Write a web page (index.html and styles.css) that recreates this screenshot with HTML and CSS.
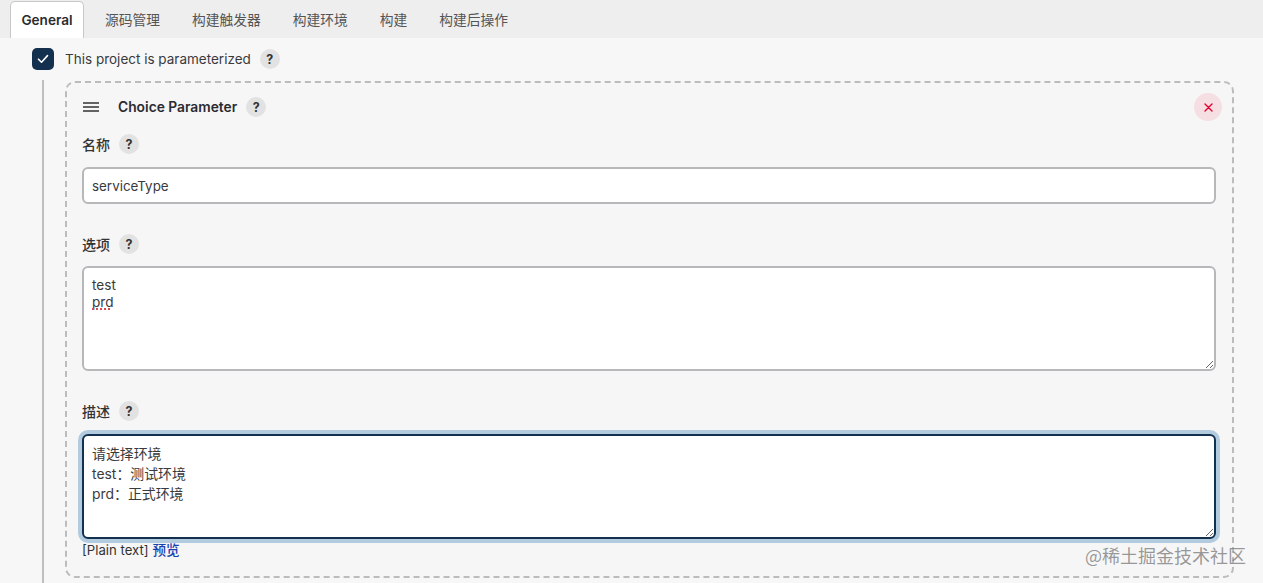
FILE: index.html
```html
<!DOCTYPE html>
<html lang="zh">
<head>
<meta charset="utf-8">
<title>Config</title>
<link rel="stylesheet" href="styles.css">
</head>
<body>
<nav class="tabs">
  <a class="tab active">General</a>
  <a class="tab">源码管理</a>
  <a class="tab">构建触发器</a>
  <a class="tab">构建环境</a>
  <a class="tab">构建</a>
  <a class="tab">构建后操作</a>
</nav>
<main class="content">
  <div class="check-row">
    <span class="checkbox"><svg width="12" height="10" viewBox="0 0 12 10"><path d="M1.5 5.2 4.5 8.2 10.5 1.6" fill="none" stroke="#fff" stroke-width="1.6" stroke-linecap="round" stroke-linejoin="round"/></svg></span>
    <span class="check-label">This project is parameterized</span>
    <span class="help">?</span>
  </div>
  <div class="nested">
    <section class="param">
      <header class="param-head">
        <svg class="drag" width="16" height="10" viewBox="0 0 16 10"><path d="M0 1h16M0 5h16M0 9h16" stroke="#333" stroke-width="1.3"/></svg>
        <strong class="param-title">Choice Parameter</strong>
        <span class="help">?</span>
        <button class="close"><svg width="9" height="9" viewBox="0 0 9 9"><path d="M1 1 8 8M8 1 1 8" stroke="#e6002e" stroke-width="1.4" stroke-linecap="round"/></svg></button>
      </header>
      <div class="label-row first"><span class="label">名称</span><span class="help">?</span></div>
      <input class="field" type="text" value="serviceType" spellcheck="false">
      <div class="label-row second"><span class="label">选项</span><span class="help">?</span></div>
      <div class="area-wrap">
        <textarea class="field area plain" spellcheck="false">test
prd</textarea>
        <span class="squiggle"></span>
      </div>
      <div class="label-row third"><span class="label">描述</span><span class="help">?</span></div>
      <textarea class="field area focus" spellcheck="false">请选择环境
test：测试环境
prd：正式环境</textarea>
      <div class="preview">[Plain text] <a class="preview-link">预览</a></div>
    </section>
  </div>
</main>
<div class="watermark">@稀土掘金技术社区</div>
</body>
</html>
```
FILE: styles.css
```css
* { box-sizing: border-box; }
html, body { height: 100%; }
body {
  margin: 0;
  height: 583px;
  overflow: hidden;
  background: #f7f7f8;
  color: #333;
  font-family: Inter, "Noto Sans CJK SC", sans-serif;
  font-size: 13.6px;
  position: relative;
}
.tabs {
  display: flex;
  align-items: flex-end;
  height: 38px;
  padding-left: 10px;
  background: #eeeeef;
}
.tab {
  display: flex;
  align-items: center;
  justify-content: center;
  height: 37px;
  padding: 0 16px 1px;
  color: #555;
  font-size: 13.75px;
  white-space: nowrap;
}
.tab.active {
  width: 74px;
  padding: 0;
  margin-right: 5px;
  background: #fff;
  border: 1px solid #c8c8c8;
  border-bottom: 0;
  border-radius: 5px 5px 0 0;
  color: #2b2b2f;
  font-size: 13.6px;
  font-weight: 600;
}
.content { padding: 10px 0 0 32px; }
.check-row { display: flex; align-items: center; height: 22px; }
.checkbox {
  display: flex;
  align-items: center;
  justify-content: center;
  width: 22px;
  height: 22px;
  border-radius: 5px;
  background: #14304f;
}
.check-label { margin-left: 11px; margin-right: 9px; color: #3a3a3d; font-size: 13.5px; }
.help {
  display: inline-flex;
  align-items: center;
  justify-content: center;
  width: 20px;
  height: 20px;
  border-radius: 50%;
  background: #e2e2e3;
  color: #333;
  font-size: 12.5px;
  font-weight: 700;
}
.nested {
  margin: 10px 0 0 10px;
  height: 503px;
  border-left: 2px solid #bdbfc1;
  padding: 1px 29px 0 21px;
}
.param {
  position: relative;
  height: 497px;
  padding: 0 16px 0 15px;
  border: 2px dashed #bcbcbe;
  border-radius: 10px;
  background: #f6f6f7;
}
.param-head { display: flex; align-items: center; height: 20px; margin-top: 14px; padding-left: 1px; }
.drag { flex: none; }
.param-title { margin: 0 9px 0 19px; font-size: 13.8px; font-weight: 600; color: #2b2b2f; }
.close {
  position: absolute;
  top: 10px;
  right: 10px;
  display: flex;
  align-items: center;
  justify-content: center;
  width: 28px;
  height: 28px;
  padding: 0;
  border: 0;
  border-radius: 50%;
  background: #f6dfe3;
}
.label-row { display: flex; align-items: center; height: 20px; }
.label-row.first { margin-top: 17px; }
.label-row.second { margin-top: 30px; }
.label-row.third { margin-top: 30px; }
.label { margin-right: 9px; color: #333; font-size: 14px; font-weight: 500; }
.field {
  display: block;
  width: 100%;
  margin-top: 13px;
  padding: 0 8px;
  background: #fff;
  border: 2px solid #b6b8ba;
  border-radius: 6px;
  color: #3a3a3d;
  font-family: Inter, "Noto Sans CJK SC", sans-serif;
  font-size: 13.4px;
  outline: 0;
}
input.field { height: 37px; }
.area {
  height: 105px;
  margin-top: 12px;
  resize: vertical;
}
.plain { padding: 9px 8px 8px; line-height: 17px; font-size: 13.6px; }
.area-wrap { position: relative; }
.squiggle {
  position: absolute;
  left: 10px;
  top: 42px;
  width: 20px;
  height: 2px;
  background: repeating-linear-gradient(90deg, #d94a4a 0 2px, transparent 2px 4px);
}
.focus {
  margin-top: 13px;
  padding: 8px 8px 8px;
  line-height: 20px;
  font-size: 13.9px;
  border-color: #14304f;
  box-shadow: 0 0 0 4px #b3cbdf;
}
.preview { margin-top: 1px; color: #333; font-size: 13.2px; line-height: 20px; }
.preview-link { color: #1a3fae; font-size: 13.6px; font-weight: 500; }
.watermark {
  position: absolute;
  left: 1085px;
  top: 543px;
  color: rgba(120, 120, 120, 0.75);
  font-family: "Noto Sans CJK SC", sans-serif;
  font-size: 18px;
  line-height: 24px;
  white-space: nowrap;
}
```
